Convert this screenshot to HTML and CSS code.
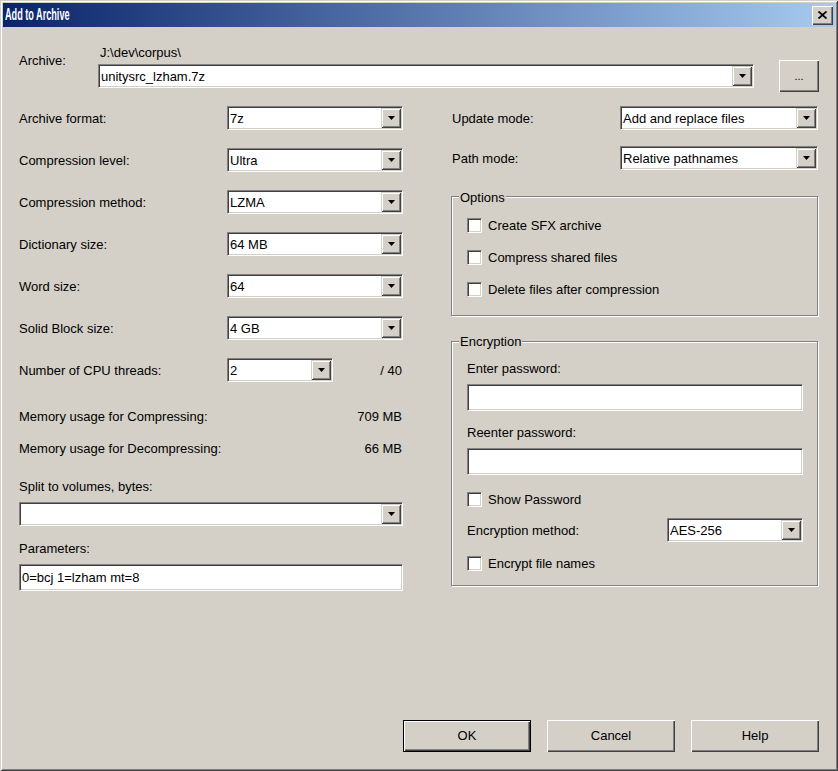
FILE: index.html
```html
<!DOCTYPE html>
<html>
<head>
<meta charset="utf-8">
<title>Add to Archive</title>
<link rel="stylesheet" href="styles.css">
</head>
<body>
<div class="window">
  <div class="titlebar">
    <span class="title">Add to Archive</span>
    <div class="close">
      <svg width="9" height="8" viewBox="0 0 9 8"><path d="M0.5 0.5 L8.5 7.5 M8.5 0.5 L0.5 7.5" stroke="#000" stroke-width="1.8" fill="none"/></svg>
    </div>
  </div>
  <div class="content">
    <div class="archive-row">
      <div class="archive-label">Archive:</div>
      <div class="archive-mid">
        <div class="path">J:\dev\corpus\</div>
        <div class="combo combo-archive"><span class="combo-text">unitysrc_lzham.7z</span><span class="combo-btn"><svg width="7" height="4" viewBox="0 0 7 4"><path d="M0 0 H7 L3.5 4 Z" fill="#000"/></svg></span></div>
      </div>
      <div class="btn btn-browse">...</div>
    </div>

    <div class="main">
      <div class="col-left">
        <div class="rows">
          <div class="row"><span class="lbl">Archive format:</span><div class="combo combo-std"><span class="combo-text">7z</span><span class="combo-btn"><svg width="7" height="4" viewBox="0 0 7 4"><path d="M0 0 H7 L3.5 4 Z" fill="#000"/></svg></span></div></div>
          <div class="row"><span class="lbl">Compression level:</span><div class="combo combo-std"><span class="combo-text">Ultra</span><span class="combo-btn"><svg width="7" height="4" viewBox="0 0 7 4"><path d="M0 0 H7 L3.5 4 Z" fill="#000"/></svg></span></div></div>
          <div class="row"><span class="lbl">Compression method:</span><div class="combo combo-std"><span class="combo-text">LZMA</span><span class="combo-btn"><svg width="7" height="4" viewBox="0 0 7 4"><path d="M0 0 H7 L3.5 4 Z" fill="#000"/></svg></span></div></div>
          <div class="row"><span class="lbl">Dictionary size:</span><div class="combo combo-std"><span class="combo-text">64 MB</span><span class="combo-btn"><svg width="7" height="4" viewBox="0 0 7 4"><path d="M0 0 H7 L3.5 4 Z" fill="#000"/></svg></span></div></div>
          <div class="row"><span class="lbl">Word size:</span><div class="combo combo-std"><span class="combo-text">64</span><span class="combo-btn"><svg width="7" height="4" viewBox="0 0 7 4"><path d="M0 0 H7 L3.5 4 Z" fill="#000"/></svg></span></div></div>
          <div class="row"><span class="lbl">Solid Block size:</span><div class="combo combo-std"><span class="combo-text">4 GB</span><span class="combo-btn"><svg width="7" height="4" viewBox="0 0 7 4"><path d="M0 0 H7 L3.5 4 Z" fill="#000"/></svg></span></div></div>
          <div class="row"><span class="lbl lbl-fixed">Number of CPU threads:</span><div class="combo combo-threads"><span class="combo-text">2</span><span class="combo-btn"><svg width="7" height="4" viewBox="0 0 7 4"><path d="M0 0 H7 L3.5 4 Z" fill="#000"/></svg></span></div><span class="threads-max">/ 40</span></div>
        </div>
        <div class="info mem1"><span>Memory usage for Compressing:</span><span>709 MB</span></div>
        <div class="info mem2"><span>Memory usage for Decompressing:</span><span>66 MB</span></div>
        <div class="label split-label">Split to volumes, bytes:</div>
        <div class="combo combo-split"><span class="combo-text"></span><span class="combo-btn"><svg width="7" height="4" viewBox="0 0 7 4"><path d="M0 0 H7 L3.5 4 Z" fill="#000"/></svg></span></div>
        <div class="label params-label">Parameters:</div>
        <div class="field field-params">0=bcj 1=lzham mt=8</div>
      </div>

      <div class="col-right">
        <div class="rrow"><span class="lbl">Update mode:</span><div class="combo combo-right"><span class="combo-text">Add and replace files</span><span class="combo-btn"><svg width="7" height="4" viewBox="0 0 7 4"><path d="M0 0 H7 L3.5 4 Z" fill="#000"/></svg></span></div></div>
        <div class="rrow rrow-path"><span class="lbl">Path mode:</span><div class="combo combo-right"><span class="combo-text">Relative pathnames</span><span class="combo-btn"><svg width="7" height="4" viewBox="0 0 7 4"><path d="M0 0 H7 L3.5 4 Z" fill="#000"/></svg></span></div></div>

        <div class="group group-options">
          <span class="legend">Options</span>
          <div class="check check-first"><span class="box"></span><span class="ctext">Create SFX archive</span></div>
          <div class="check check-next"><span class="box"></span><span class="ctext">Compress shared files</span></div>
          <div class="check check-next"><span class="box"></span><span class="ctext">Delete files after compression</span></div>
        </div>

        <div class="group group-enc">
          <span class="legend legend-enc">Encryption</span>
          <div class="label enc-label1">Enter password:</div>
          <div class="field field-pw"></div>
          <div class="label enc-label2">Reenter password:</div>
          <div class="field field-pw"></div>
          <div class="check check-show"><span class="box"></span><span class="ctext">Show Password</span></div>
          <div class="enc-method"><span class="lbl">Encryption method:</span><div class="combo combo-enc"><span class="combo-text">AES-256</span><span class="combo-btn"><svg width="7" height="4" viewBox="0 0 7 4"><path d="M0 0 H7 L3.5 4 Z" fill="#000"/></svg></span></div></div>
          <div class="check check-names"><span class="box"></span><span class="ctext">Encrypt file names</span></div>
        </div>
      </div>
    </div>

    <div class="footer">
      <div class="btn btn-action btn-default">OK</div>
      <div class="btn btn-action">Cancel</div>
      <div class="btn btn-action">Help</div>
    </div>
  </div>
</div>
</body>
</html>
```

FILE: styles.css
```css
* { box-sizing: border-box; }

body {
  margin: 0;
  font-family: "Liberation Sans", Arial, sans-serif;
  font-size: 13px;
  color: #000;
  background: #d4d0c8;
}

.window {
  width: 838px;
  height: 771px;
  background: #d4d0c8;
  padding: 3px;
  display: flex;
  flex-direction: column;
  box-shadow: inset 1px 1px 0 #d4d0c8, inset -1px -1px 0 #404040,
              inset 2px 2px 0 #ffffff, inset -2px -2px 0 #808080;
}

.titlebar {
  height: 24px;
  flex: none;
  background: linear-gradient(to right, #0a246a, #a6caf0);
  display: flex;
  align-items: center;
  padding: 0 2px 0 2px;
}

.title {
  color: #fff;
  font-weight: bold;
  font-size: 16px;
  line-height: 24px;
  display: inline-block;
  white-space: nowrap;
  transform: scaleX(0.57);
  transform-origin: left center;
}

.close {
  margin-left: auto;
  width: 21px;
  height: 19px;
  background: #d4d0c8;
  display: flex;
  align-items: center;
  justify-content: center;
  box-shadow: inset 1px 1px 0 #ffffff, inset -1px -1px 0 #404040, inset -2px -2px 0 #808080;
}

.content {
  flex: 1;
  display: flex;
  flex-direction: column;
  padding: 17px 16px 16px 16px;
}

/* archive row */
.archive-row {
  display: flex;
  align-items: flex-start;
}
.archive-label {
  width: 79px;
  margin-top: 9px;
  line-height: 16px;
}
.archive-mid {
  width: 656px;
}
.path {
  height: 20px;
  line-height: 16px;
  padding-top: 1px;
  padding-left: 2px;
}

/* combos */
.combo {
  display: flex;
  align-items: center;
  height: 24px;
  background: #fff;
  border-top: 1px solid #808080;
  border-left: 1px solid #808080;
  border-bottom: 1px solid #fff;
  border-right: 1px solid #fff;
  box-shadow: inset 1px 1px 0 #404040, inset -1px -1px 0 #d4d0c8;
  padding: 1px;
}
.combo-text {
  flex: 1;
  padding-left: 1px;
  padding-top: 2px;
  line-height: 18px;
  height: 20px;
  white-space: nowrap;
  overflow: hidden;
}
.combo-btn {
  width: 20px;
  height: 20px;
  flex: none;
  background: #d4d0c8;
  display: flex;
  align-items: center;
  justify-content: center;
  box-shadow: inset 1px 1px 0 #d4d0c8, inset -1px -1px 0 #404040,
              inset 2px 2px 0 #ffffff, inset -2px -2px 0 #808080;
}
.combo-archive { width: 656px; }
.combo-std { width: 176px; }
.combo-threads { width: 106px; }
.combo-split { width: 384px; margin-top: 7px; }
.combo-right { width: 198px; }
.combo-enc { width: 136px; margin-left: auto; }

/* buttons */
.btn {
  background: #d4d0c8;
  display: flex;
  align-items: center;
  justify-content: center;
  box-shadow: inset 1px 1px 0 #ffffff, inset -1px -1px 0 #404040, inset -2px -2px 0 #808080;
}
.btn-browse {
  width: 40px;
  height: 32px;
  margin-left: 25px;
  margin-top: 16px;
  font-size: 11px;
}
.footer {
  margin-top: auto;
  display: flex;
  justify-content: flex-end;
  gap: 16px;
}
.btn-action {
  width: 128px;
  height: 32px;
  padding-bottom: 2px;
}
.btn-default {
  border: 1px solid #000;
}

/* main grid */
.main {
  display: grid;
  grid-template-columns: 384px 367px;
  column-gap: 48px;
  margin-top: 14px;
  align-items: start;
}

.rows {
  display: flex;
  flex-direction: column;
  gap: 18px;
}
.row {
  display: flex;
  align-items: center;
  height: 24px;
}
.lbl {
  flex: 1;
  line-height: 16px;
  padding-top: 2px;
  white-space: nowrap;
}
.lbl-fixed {
  flex: none;
  width: 208px;
}
.threads-max {
  margin-left: auto;
  padding-right: 1px;
  padding-top: 2px;
  line-height: 16px;
}

.info {
  display: flex;
  justify-content: space-between;
  line-height: 16px;
  padding-right: 1px;
}
.mem1 { margin-top: 27px; }
.mem2 { margin-top: 16px; }

.label { line-height: 16px; }
.split-label { margin-top: 22px; }
.params-label { margin-top: 15px; }

.field {
  height: 27px;
  background: #fff;
  border-top: 1px solid #808080;
  border-left: 1px solid #808080;
  border-bottom: 1px solid #fff;
  border-right: 1px solid #fff;
  box-shadow: inset 1px 1px 0 #404040, inset -1px -1px 0 #d4d0c8;
  padding: 2px 2px 0 2px;
  line-height: 21px;
  white-space: nowrap;
}
.field-params {
  width: 384px;
  margin-top: 7px;
}
.field-pw {
  width: 336px;
  margin-left: 15px;
  margin-top: 7px;
}

/* right column */
.rrow {
  display: flex;
  align-items: center;
  height: 24px;
  padding-left: 1px;
}
.rrow-path { margin-top: 16px; }

.group {
  display: flex;
  flex-direction: column;
  width: 367px;
  border: 1px solid #808080;
  box-shadow: 1px 1px 0 #fff, inset 1px 1px 0 #fff;
}
.group-options {
  margin-top: 26px;
  height: 120px;
}
.group-enc {
  margin-top: 25px;
  height: 245px;
}
.legend {
  align-self: flex-start;
  margin: -8px 0 0 7px;
  padding: 1px 1px 0 1px;
  height: 16px;
  line-height: 15px;
  background: #d4d0c8;
}
.legend-enc {
  padding-top: 0;
}

.check {
  display: flex;
  align-items: center;
  gap: 6px;
  height: 16px;
  margin-left: 15px;
}
.ctext {
  line-height: 16px;
  padding-top: 2px;
}
.check-first { margin-top: 12px; }
.check-next { margin-top: 16px; }
.box {
  width: 15px;
  height: 15px;
  flex: none;
  background: #fff;
  border-top: 1px solid #808080;
  border-left: 1px solid #808080;
  border-bottom: 1px solid #fff;
  border-right: 1px solid #fff;
  box-shadow: inset 1px 1px 0 #404040, inset -1px -1px 0 #d4d0c8;
}

.enc-label1 { margin-top: 11px; margin-left: 15px; }
.enc-label2 { margin-top: 14px; margin-left: 15px; }
.check-show { margin-top: 16px; }
.enc-method {
  display: flex;
  align-items: center;
  width: 336px;
  height: 24px;
  margin-left: 15px;
  margin-top: 11px;
}
.check-names { margin-top: 13px; }
```
